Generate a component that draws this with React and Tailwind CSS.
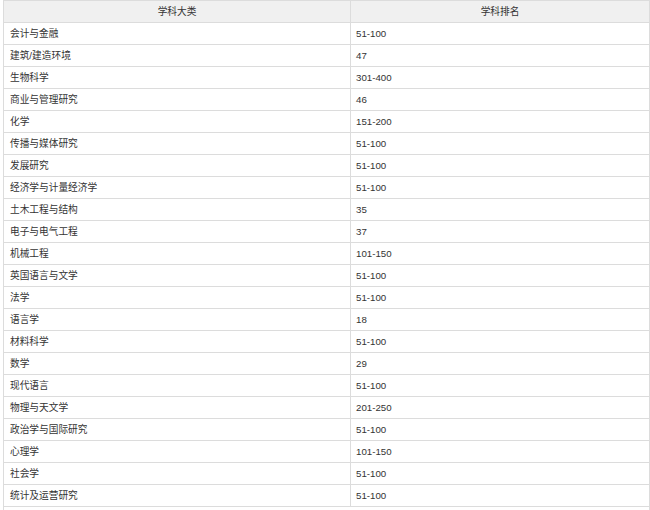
import React from 'react'

const rows = [
  ['会计与金融', '51-100'],
  ['建筑/建造环境', '47'],
  ['生物科学', '301-400'],
  ['商业与管理研究', '46'],
  ['化学', '151-200'],
  ['传播与媒体研究', '51-100'],
  ['发展研究', '51-100'],
  ['经济学与计量经济学', '51-100'],
  ['土木工程与结构', '35'],
  ['电子与电气工程', '37'],
  ['机械工程', '101-150'],
  ['英国语言与文学', '51-100'],
  ['法学', '51-100'],
  ['语言学', '18'],
  ['材料科学', '51-100'],
  ['数学', '29'],
  ['现代语言', '51-100'],
  ['物理与天文学', '201-250'],
  ['政治学与国际研究', '51-100'],
  ['心理学', '101-150'],
  ['社会学', '51-100'],
  ['统计及运营研究', '51-100']
]

const App = () => {
  return (
    <div className="h-[510px] overflow-hidden bg-white pl-[3px] text-[9.7px] leading-none text-[#333] font-['Liberation_Sans','Noto_Sans_CJK_SC',sans-serif]">
      <div className="w-[647px] border-l border-r border-[#dcdcdc]">
        {/* header */}
        <div className="flex h-[23px] border-t border-b border-[#dcdcdc] bg-[#f0f0f0]">
          <div className="w-[347px] flex items-center justify-center border-r border-[#dcdcdc]">学科大类</div>
          <div className="flex-1 flex items-center justify-center">学科排名</div>
        </div>

        {rows.map(([name, rank]) => (
          <div key={name} className="flex h-[22px] border-b border-[#dcdcdc]">
            <div className="w-[347px] flex items-center pl-[6px] border-r border-[#dcdcdc]">{name}</div>
            <div className="flex-1 flex items-center pl-[5px]">{rank}</div>
          </div>
        ))}

        <div className="h-[22px]" />
      </div>
    </div>
  )
}

export default App
